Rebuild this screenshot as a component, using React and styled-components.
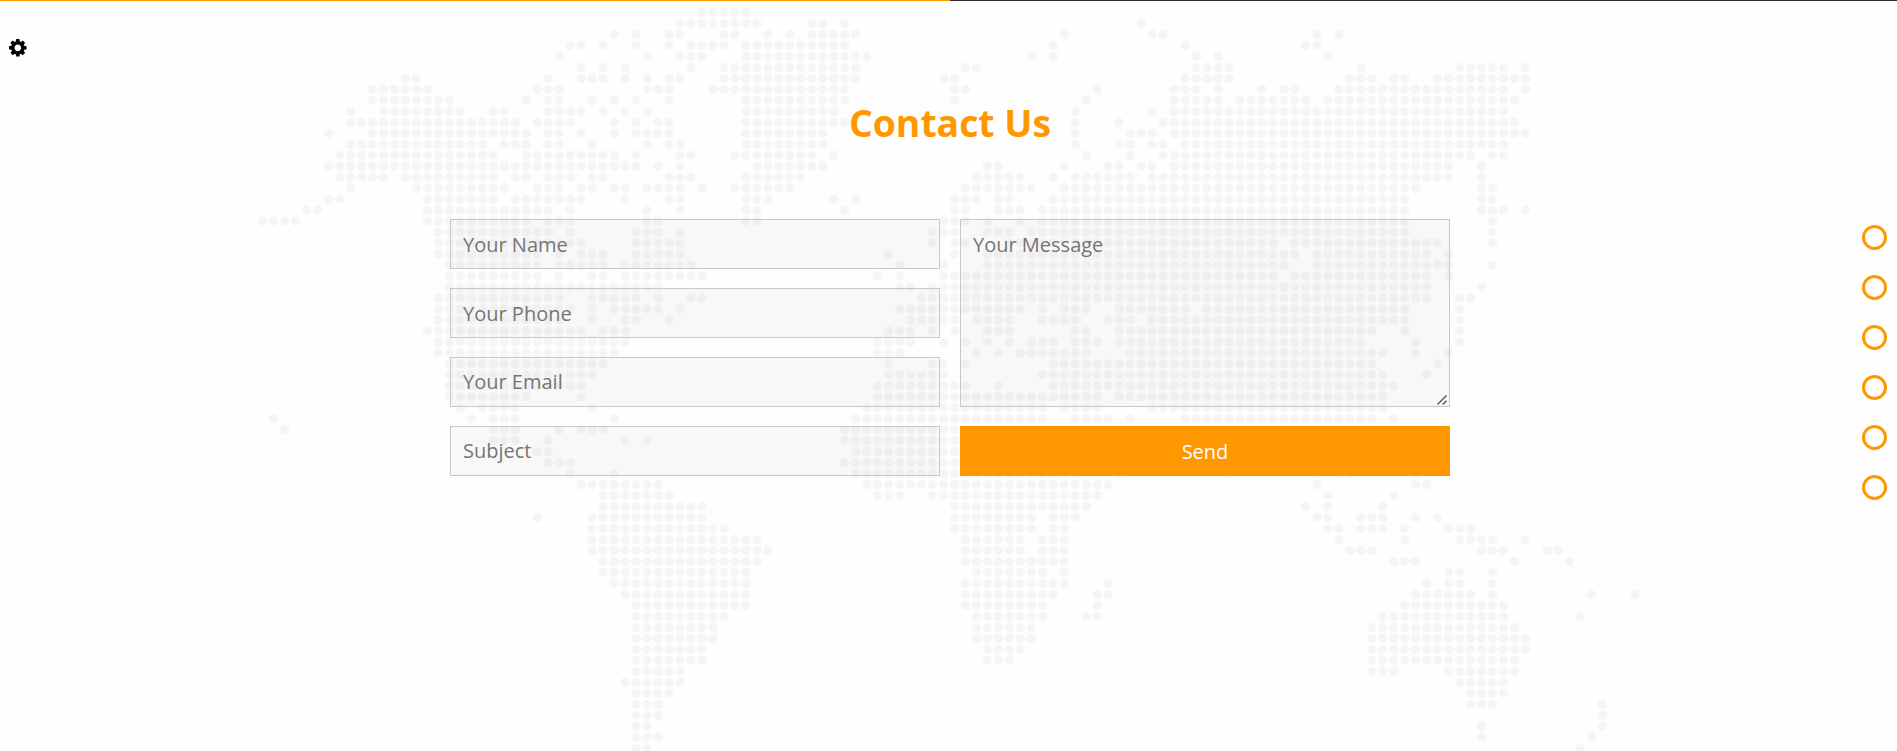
import React from "react";
import styled, { createGlobalStyle } from "styled-components";

const GlobalStyle = createGlobalStyle`
  *, *::before, *::after { box-sizing: border-box; }
  html, body { margin: 0; padding: 0; height: 100%; }
  body {
    overflow: hidden;
    background: #fefefe;
    font-family: "Open Sans", "Noto Sans", sans-serif;
  }
`;

const ORANGE = "#ff9800";

/* Land cells of the dotted map: one entry per row, listing column runs. */
const LAND = [
  "40-44",
  "38-45 50-51 53 80",
  "32 34 37-38 42-43 46 48 50-54 73 81-82 96 98",
  "28-29 31 34 37 39-42 44-53 72 84 95-96",
  "27 35 38-40 44-55 70 72 85 87 97",
  "29 31 33 39 42-54 64-65 85-88 100 109-113 115",
  "13-14 26 29-31 33 35 37-38 42-54 62-63 84-88 99-101 103-104 107-115",
  "10-15 25-27 35-37 41-53 63-64 76 83-85 87 91 93-94 98-113 115",
  "10-17 24 26-27 30 32 34 37 44-53 63 75 83-87 89-95 97-114",
  "8 11-18 21-22 26-29 31 33 35 44-52 74 81 83-113",
  "8-23 25-28 32 34 36-37 44-53 74 78 82-114",
  "6 10-24 26-27 29 32 34-37 44-51 74 79-81 83-115",
  "8-20 22-24 26-27 30 35 37-38 44-51 74 78-79 81-82 84-113",
  "7-21 24-32 34 38-39 43-50 52 75 79 82-110 112-113",
  "6-34 36 38 45-51 66-67 73 77-78 80-81 83-108 111",
  "7-11 13-21 23-24 26-28 30-31 37-39 44-49 65-69 72 74-79 81-108 111",
  "8 14-22 25-27 29-30 32-33 35-38 40 43-48 64-70 73-105 111-112",
  "6-7 15-21 23-29 33 37-38 44-46 52 54 63-65 67-68 72-104 111-112",
  "4-5 15-26 28 35 38 44-45 53 63-64 67-69 71-104 111-113 115",
  "0-3 15-24 26-28 35-36 44-45 62-64 66 69 71-104 112",
  "16-26 28 34-36 38 61-63 66-68 70-104 112",
  "16-29 34-38 61 63-64 68-92 94-107 112",
  "16-25 27 29-31 34-38 57 63 66-94 96-106 108",
  "17-25 27-31 33-39 58 62 66-93 96-108 112",
  "17-25 27 30-31 33-40 56 58 62-92 94-106 108",
  "17-36 58-59 61-106 111",
  "16-27 30-34 36 39-40 60-106 109-110",
  "16-28 30 32-36 38 58-69 71 73-75 78-84 86-104 109",
  "16-27 30 33-34 37 59-63 65-68 71-74 77-79 81-104 109",
  "15-29 31-33 57-59 61 63 66-68 74-75 78-101 104 109",
  "16-33 56-59 62 64 66 68 70-72 74-76 78-100 105 109",
  "16-32 56-58 65 67 69-75 79-102 105 108",
  "17-31 57 61-62 64 72-101 107",
  "17-30 57-62 71-102 106",
  "17-29 56-64 67 72-103",
  "17-24 29 56-76 78-102",
  "18 20-23 30 55-71 73-76 81-102",
  "1 19 21-23 32 54-71 74-77 79 84-101 103",
  "2 21-23 27 29-31 53-75",
  "21-23 26 33 35 53-75",
  "25-26 54-75",
  "26-28 53-75",
  "28 32 54-74 78 88 96 98-99 105",
  "29-36 55-77 96 105-106",
  "31-37 56-58 61-76 97 103",
  "31-40 63-75 95 97 102",
  "25 30-40 63-70 72-74 96-97 100-102 105 107",
  "30-42 63-70 72-73 97-98 100-102 104 108-110",
  "30-45 64-69 71-73 98 104 109-112 115",
  "30-46 64-69 71-73 99-101 111-113 117-118",
  "31-45 64-73 103-105 114 119",
  "31-44 65-71 73 108-109 112",
  "32-44 64-73 77 106 108-109 112",
  "33-44 64-72 76-77 105-110 112 121 125",
  "34-44 64-71 76 104-113",
  "34-42 65-71 75-76 102-113 120",
  "34-41 65-70 101-114",
  "34-41 65-70 101-115",
  "34-40 66-69 101-115",
  "34-40 66-68 101-114",
  "34-38 101-103 108-114",
  "33-38 109-113",
  "34-37 110-113",
  "34-36 110-112 122",
  "34-36 122",
  "34-35 111 122",
  "34-36 111 121",
  "34-35 120",
];

const PITCH = 10.98;
const DOTS = LAND.flatMap((row, r) =>
  row.split(" ").flatMap((run) => {
    const [a, b = a] = run.split("-").map(Number);
    return Array.from({ length: b - a + 1 }, (_, i) => [
      (262.75 + (a + i) * PITCH).toFixed(2),
      (12.5 + r * PITCH).toFixed(2),
    ]);
  })
);

const Page = styled.main`
  position: relative;
  width: 1900px;
  height: 751px;
  overflow: hidden;
`;

const MapLayer = styled.svg`
  position: absolute;
  inset: 0;
  width: 1900px;
  height: 751px;
  fill: #f5f5f5;
  pointer-events: none;
`;

const Progress = styled.div`
  height: 1px;
  background: #2d2d2d;
`;

const ProgressFill = styled.div`
  width: 50%;
  height: 100%;
  background: ${ORANGE};
`;

const Contact = styled.section`
  position: relative;
  display: flex;
  flex-direction: column;
  align-items: center;
  padding-top: 95px;
`;

const Title = styled.h2`
  margin: 0 0 70.3px;
  height: 53px;
  line-height: 53px;
  font-size: 37.33px;
  font-weight: 700;
  color: ${ORANGE};
`;

const Form = styled.form`
  display: grid;
  grid-template-columns: 490px 490px;
  grid-template-rows: repeat(4, 50px);
  gap: 18.8px 20px;
`;

const Field = styled.input`
  grid-column: 1;
  width: 100%;
  height: 50px;
  padding: 0 12px;
  border: 1px solid #c8c8c8;
  border-radius: 0;
  outline: none;
  background: rgba(0, 0, 0, 0.025);
  font: 400 20px "Open Sans", "Noto Sans", sans-serif;
  color: #333;
  &::placeholder { color: #757575; }
`;

const MessageBox = styled.div`
  position: relative;
  grid-column: 2;
  grid-row: 1 / span 3;
`;

const Message = styled(Field).attrs({ as: "textarea" })`
  display: block;
  height: 100%;
  padding: 11px 12px;
  resize: none;
`;

const Grip = styled.svg`
  position: absolute;
  right: 3px;
  bottom: 2px;
  width: 10px;
  height: 10px;
  stroke: #555;
  stroke-width: 1.4;
`;

const Send = styled.button`
  grid-column: 2;
  grid-row: 4;
  height: 50px;
  padding: 2px 0 0;
  border: 0;
  background: ${ORANGE};
  color: #fff;
  font: 400 20px "Open Sans", "Noto Sans", sans-serif;
`;

const Settings = styled.button`
  position: fixed;
  top: 39px;
  left: 9px;
  display: flex;
  padding: 0;
  border: 0;
  background: none;
  color: #000;
`;

const DotNav = styled.nav`
  position: fixed;
  top: 225px;
  right: 10px;
  display: flex;
  flex-direction: column;
  gap: 25px;
`;

const NavDot = styled.a`
  width: 25px;
  height: 25px;
  border: 3px solid ${ORANGE};
  border-radius: 50%;
`;

const Cog = () => (
  <svg width="17.6" height="17.6" viewBox="0 128 1536 1536" fill="currentColor" aria-hidden="true">
    <path d="M1058 896q0-120-85-205t-205-85-205 85-85 205 85 205 205 85 205-85 85-205zm478-109v222q0 12-8 23t-20 13l-185 28q-19 54-39 91 35 50 107 138 10 12 10 25t-9 23q-27 37-99 108t-94 71q-12 0-26-9l-138-108q-44 23-91 38-16 136-29 186-7 28-36 28h-222q-14 0-24.500-8.500t-11.500-21.500l-28-184q-49-16-90-37l-141 107q-10 9-25 9-14 0-25-11-126-114-165-168-7-10-7-23 0-12 8-23 15-21 51-66.500t54-70.500q-27-50-41-99l-183-27q-13-2-21-12.500t-8-23.500v-222q0-12 8-23t19-13l186-28q14-46 39-92-40-57-107-138-10-12-10-24 0-10 9-23 26-36 98.500-107.500t94.500-71.500q13 0 26 10l138 107q44-23 91-38 16-136 29-186 7-28 36-28h222q14 0 24.500 8.500t11.500 21.500l28 184q49 16 90 37l142-107q9-9 24-9 13 0 25 10 129 119 165 170 7 8 7 22 0 12-8 23-15 21-51 66.500t-54 70.500q26 50 41 98l183 28q13 2 21 12.500t8 23.500z" />
  </svg>
);

export default function App() {
  return (
    <>
      <GlobalStyle />
      <Page>
        <MapLayer viewBox="0 0 1900 751" aria-hidden="true">
          {DOTS.map(([x, y]) => (
            <circle key={`${x},${y}`} cx={x} cy={y} r="4.6" />
          ))}
        </MapLayer>
        <Progress>
          <ProgressFill />
        </Progress>
        <Contact>
          <Title>Contact Us</Title>
          <Form onSubmit={(e) => e.preventDefault()}>
            <Field type="text" placeholder="Your Name" />
            <Field type="tel" placeholder="Your Phone" />
            <Field type="email" placeholder="Your Email" />
            <Field type="text" placeholder="Subject" />
            <MessageBox>
              <Message placeholder="Your Message" />
              <Grip viewBox="0 0 10 10" aria-hidden="true">
                <path d="M0.5 9.500L9.500 0.500M5.800 9.500L9.500 5.800" />
              </Grip>
            </MessageBox>
            <Send type="submit">Send</Send>
          </Form>
        </Contact>
      </Page>
      <Settings type="button" aria-label="Settings">
        <Cog />
      </Settings>
      <DotNav>
        {[1, 2, 3, 4, 5, 6].map((n) => (
          <NavDot key={n} href={`#section-${n}`} aria-label={`Section ${n}`} />
        ))}
      </DotNav>
    </>
  );
}
